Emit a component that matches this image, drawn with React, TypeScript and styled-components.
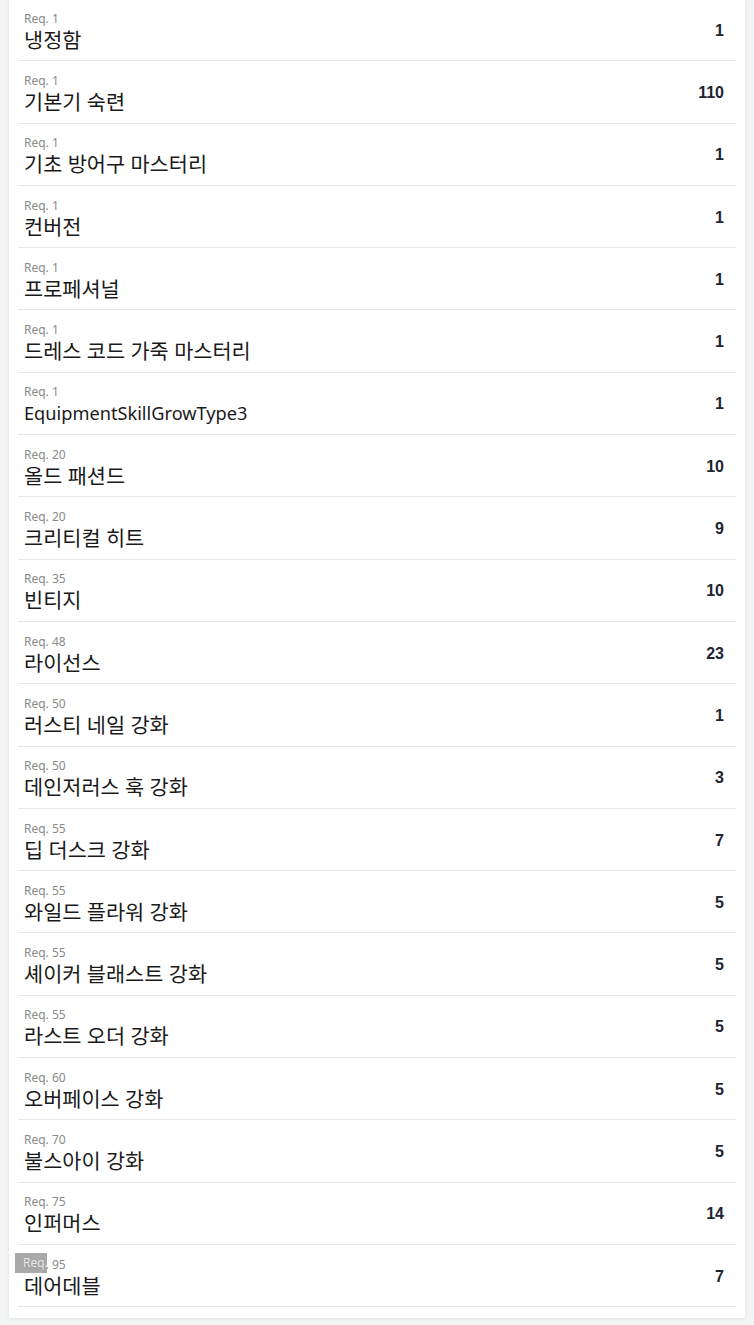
import React from "react";
import styled, { createGlobalStyle } from "styled-components";

const Global = createGlobalStyle`
  html, body { margin: 0; padding: 0; background: #f3f4f6; }
  body { font-family: "Noto Sans", "Noto Sans CJK KR", sans-serif; }
`;

const Page = styled.div`
  padding: 0 9px 7px 9px;
  width: 754px;
  box-sizing: border-box;
`;

const Card = styled.div`
  position: relative;
  background: #ffffff;
  margin-top: -1px;
  padding: 0 9px 11px 9px;
  box-shadow: 0 1px 4px rgba(0, 0, 0, 0.08);
`;

const List = styled.ul`
  list-style: none;
  margin: 0;
  padding: 0;
`;

const Row = styled.li`
  position: relative;
  display: flex;
  align-items: center;
  justify-content: space-between;
  height: 62.3px;
  box-sizing: border-box;
  border-bottom: 1px solid #e6e6e6;
  padding: 0 12px 0 6px;
`;

const Info = styled.div`
  display: flex;
  flex-direction: column;
  padding-top: 4px;
`;

const Req = styled.span`
  font-family: "Noto Sans", "Noto Sans CJK KR", sans-serif;
  font-size: 12px;
  line-height: 16px;
  color: #8a8a8a;
`;

const Name = styled.span<{ $hangul: boolean }>`
  font-family: "Noto Sans", "Noto Sans CJK KR", sans-serif;
  font-size: ${(p) => (p.$hangul ? "20.8px" : "18.2px")};
  line-height: 26px;
  color: #1a1a1a;
`;

const Count = styled.span`
  font-family: "Liberation Sans", Arial, sans-serif;
  font-weight: 700;
  font-size: 16px;
  color: #1e2430;
  margin-top: 2px;
`;

const DragGhost = styled.div`
  position: absolute;
  left: -3px;
  top: 8px;
  width: 32px;
  height: 20px;
  background: rgba(160, 160, 160, 0.9);
  color: #e4e4e4;
  font-family: "Noto Sans", sans-serif;
  font-size: 12px;
  line-height: 20px;
  padding-left: 8px;
  box-sizing: border-box;
  overflow: hidden;
`;

const items: [number, string, number][] = [
  [1, "냉정함", 1],
  [1, "기본기 숙련", 110],
  [1, "기초 방어구 마스터리", 1],
  [1, "컨버전", 1],
  [1, "프로페셔널", 1],
  [1, "드레스 코드 가죽 마스터리", 1],
  [1, "EquipmentSkillGrowType3", 1],
  [20, "올드 패션드", 10],
  [20, "크리티컬 히트", 9],
  [35, "빈티지", 10],
  [48, "라이선스", 23],
  [50, "러스티 네일 강화", 1],
  [50, "데인저러스 훅 강화", 3],
  [55, "딥 더스크 강화", 7],
  [55, "와일드 플라워 강화", 5],
  [55, "셰이커 블래스트 강화", 5],
  [55, "라스트 오더 강화", 5],
  [60, "오버페이스 강화", 5],
  [70, "불스아이 강화", 5],
  [75, "인퍼머스", 14],
  [95, "데어데블", 7],
];

export default function App() {
  return (
    <>
      <Global />
      <Page>
        <Card>
          <List>
            {items.map(([lv, name, n], i) => (
              <Row key={i}>
                <Info>
                  <Req>Req. {lv}</Req>
                  <Name $hangul={/[\uAC00-\uD7A3]/.test(name)}>{name}</Name>
                </Info>
                <Count>{n}</Count>
                {i === items.length - 1 && <DragGhost>Req.</DragGhost>}
              </Row>
            ))}
          </List>
        </Card>
      </Page>
    </>
  );
}
